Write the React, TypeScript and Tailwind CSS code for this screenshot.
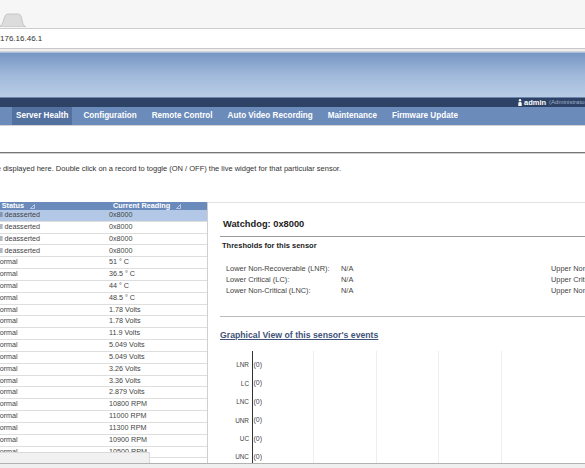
import React from 'react';

const rows: [string, string][] = [
  ['All deasserted', '0x8000'],
  ['All deasserted', '0x8000'],
  ['All deasserted', '0x8000'],
  ['All deasserted', '0x8000'],
  ['Normal', '51 ° C'],
  ['Normal', '36.5 ° C'],
  ['Normal', '44 ° C'],
  ['Normal', '48.5 ° C'],
  ['Normal', '1.78 Volts'],
  ['Normal', '1.78 Volts'],
  ['Normal', '11.9 Volts'],
  ['Normal', '5.049 Volts'],
  ['Normal', '5.049 Volts'],
  ['Normal', '3.26 Volts'],
  ['Normal', '3.36 Volts'],
  ['Normal', '2.879 Volts'],
  ['Normal', '10800 RPM'],
  ['Normal', '11000 RPM'],
  ['Normal', '11300 RPM'],
  ['Normal', '10900 RPM'],
  ['Normal', '10500 RPM'],
];

const navItems = ['Server Health', 'Configuration', 'Remote Control', 'Auto Video Recording', 'Maintenance', 'Firmware Update'];

const thresholds: [string, string, string][] = [
  ['Lower Non-Recoverable (LNR):', 'N/A', 'Upper Non-Recoverable (UNR):'],
  ['Lower Critical (LC):', 'N/A', 'Upper Critical (UC):'],
  ['Lower Non-Critical (LNC):', 'N/A', 'Upper Non-Critical (UNC):'],
];

const chartLabels = ['LNR', 'LC', 'LNC', 'UNR', 'UC', 'UNC'];

const SortIcon = () => (
  <svg width="5" height="5" viewBox="0 0 5 5" className="ml-[6px] inline-block">
    <path d="M0.5 4.5 L4.5 0.5 L4.5 4.5 Z" fill="none" stroke="#cbd8ec" strokeWidth="0.8" />
  </svg>
);

const App = () => {
  return (
    <div className="relative w-[585px] h-[468px] overflow-hidden bg-white font-['Liberation_Sans',Arial,sans-serif]">
      {/* browser tab strip */}
      <div className="h-[29px] bg-[#f6f6f6] border-b border-[#cdcdcd] flex items-end">
        <svg width="26" height="14" viewBox="0 0 26 14" className="mb-[1px]">
          <path d="M-2 14 L0 13 Q2 12 3 9 L5 3 Q6 1 8 1 L18 1 Q20 1 21 3 L23 11 Q24 13 26 14 Z" fill="#dcdcdc" stroke="#bdbdbd" strokeWidth="0.8" />
        </svg>
      </div>
      {/* address bar */}
      <div className="h-[20px] bg-white border-b border-[#c8c8c8] flex items-center">
        <span className="text-[8px] leading-[10px] text-[#333]">176.16.46.1</span>
      </div>
      <div className="h-[3px] bg-[#efefef] border-b border-[#d6d6d6]" />

      {/* banner */}
      <div className="h-[45px] bg-gradient-to-b from-[#7696c3] via-[#a0b9db] to-[#b9cce6] border-t border-[#a9bedd]" />
      <div className="h-[10px] bg-[#2d4264] border-t border-[#6a84ab] flex items-center pl-[518px]">
        <div className="flex items-center whitespace-nowrap">
          <svg width="4" height="7" viewBox="0 0 4 7" className="mr-[2px]">
            <circle cx="2" cy="1.3" r="1.2" fill="#fff" />
            <path d="M0.3 7 L0.3 4 Q0.3 3 2 3 Q3.7 3 3.7 4 L3.7 7 Z" fill="#fff" />
          </svg>
          <span className="text-[7.5px] leading-[9px] font-bold text-white">admin</span>
          <span className="ml-[3px] text-[6px] leading-[9px] text-[#9eb0c9]">(Administrator)</span>
        </div>
      </div>

      {/* nav */}
      <div className="h-[18px] bg-[#6b8bba] flex items-stretch pl-[12px] gap-[7px] border-b border-[#d3d3d3] box-content">
        {navItems.map((item, i) => (
          <div
            key={item}
            className={`px-[4px] flex items-center text-[8.15px] font-bold text-white whitespace-nowrap ${i === 0 ? 'bg-[#52719f]' : ''}`}
          >
            {item}
          </div>
        ))}
      </div>

      <div className="h-[26px]" />
      <div className="h-[1px] bg-[#767676]" />
      <div className="h-[1px] bg-[#d0d0d0]" />

      {/* description */}
      <div className="mt-[10px] w-[341px] flex justify-end">
        <p className="whitespace-nowrap text-[7.5px] leading-[10px] text-[#333] shrink-0">
          All sensor related information will be displayed here. Double click on a record to toggle (ON / OFF) the live widget for that particular sensor.
        </p>
      </div>

      {/* main area */}
      <div className="mt-[28px] flex">
        {/* sensor table */}
        <div className="-ml-[8px] w-[216px] shrink-0 border-r border-[#cfcfcf]">
          <div className="h-[8px] bg-[#6a8abb] flex text-[7.3px] leading-[8px] font-bold text-white">
            <div className="w-[115px] pl-[9.7px] flex items-center">
              Status <SortIcon />
            </div>
            <div className="pl-[6px] flex items-center">
              Current Reading <SortIcon />
            </div>
          </div>
          {rows.map(([status, reading], i) => (
            <div
              key={i}
              className={`h-[11.84px] flex items-center border-b border-[#dedede] text-[7.2px] text-[#444] ${i === 0 ? 'bg-[#b3c8e6]' : ''}`}
            >
              <div className="w-[115px] pl-[2.5px] whitespace-nowrap">{status}</div>
              <div className="pl-[2px] whitespace-nowrap">{reading}</div>
            </div>
          ))}
        </div>

        {/* sensor details */}
        <div className="flex-1 border-t border-[#e2e2e2]">
          <div className="ml-[12px]">
            <div className="pt-[14px] pb-[5px] pl-[3px] border-b border-[#9a9a9a]">
              <h1 className="text-[9.3px] leading-[14px] font-bold text-[#222] whitespace-nowrap">Watchdog: 0x8000</h1>
            </div>
            <p className="mt-[4px] pl-[2px] text-[7.5px] leading-[10px] font-bold text-[#222] whitespace-nowrap">
              Thresholds for this sensor
            </p>
            <div className="mt-[11.5px] pl-[6px] text-[7.4px] leading-[11px] text-[#444]">
              {thresholds.map(([l, v, u]) => (
                <div key={l} className="flex whitespace-nowrap">
                  <span className="w-[115px] shrink-0">{l}</span>
                  <span className="w-[210px] shrink-0">{v}</span>
                  <span className="shrink-0">{u}</span>
                </div>
              ))}
            </div>
            <div className="mt-[20.5px] h-[1px] bg-[#bcbcbc]" />
            <a className="block mt-[12.5px] text-[8.7px] leading-[11px] font-bold text-[#3f5378] underline whitespace-nowrap">
              Graphical View of this sensor's events
            </a>

            {/* events chart */}
            <div className="mt-[10.5px] flex">
              <div className="w-[29px] pt-[5px] shrink-0">
                {chartLabels.map((l) => (
                  <div key={l} className="h-[18.4px] flex items-center justify-end text-[6.4px] text-[#444]">
                    {l}
                  </div>
                ))}
              </div>
              <div className="ml-[2.5px] relative flex-1 border-l-[1.5px] border-[#333] pt-[5px] h-[130px]">
                <div className="absolute inset-0 flex pointer-events-none">
                  <div className="w-[61px] border-r border-[#eeeeee]" />
                  <div className="w-[63px] border-r border-[#eeeeee]" />
                  <div className="w-[62px] border-r border-[#eeeeee]" />
                  <div className="w-[63px] border-r border-[#eeeeee]" />
                </div>
                {chartLabels.map((l) => (
                  <div key={l} className="h-[18.4px] pl-[1px] flex items-center text-[7px] text-[#444]">
                    (0)
                  </div>
                ))}
              </div>
            </div>
          </div>
        </div>
      </div>

      {/* browser status popup and bottom edge */}
      <div className="absolute left-0 top-[452px] w-[150px] h-[11px] bg-[#f1f1f1] border-t border-r border-[#dadada]" />
      <div className="absolute left-0 right-0 bottom-0 h-[5px] bg-[#efefef] border-t border-[#b2b2b2]" />
    </div>
  );
};

export default App;
